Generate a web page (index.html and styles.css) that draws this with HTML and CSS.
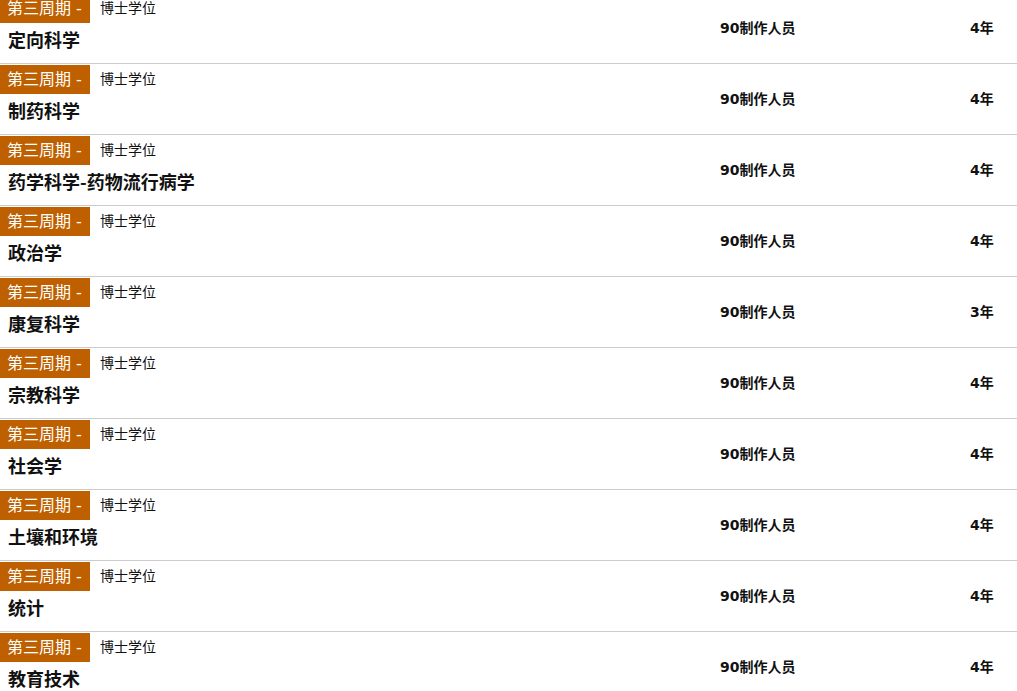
FILE: index.html
```html
<!DOCTYPE html>
<html lang="zh">
<head>
<meta charset="utf-8">
<link rel="stylesheet" href="styles.css">
</head>
<body>
<div class="list">
  <div class="row"><div class="info"><div class="meta"><span class="badge">第三周期 -</span><span class="degree">博士学位</span></div><div class="title">定向科学</div></div><div class="credits">90制作人员</div><div class="years">4年</div></div>
  <div class="row"><div class="info"><div class="meta"><span class="badge">第三周期 -</span><span class="degree">博士学位</span></div><div class="title">制药科学</div></div><div class="credits">90制作人员</div><div class="years">4年</div></div>
  <div class="row"><div class="info"><div class="meta"><span class="badge">第三周期 -</span><span class="degree">博士学位</span></div><div class="title">药学科学-药物流行病学</div></div><div class="credits">90制作人员</div><div class="years">4年</div></div>
  <div class="row"><div class="info"><div class="meta"><span class="badge">第三周期 -</span><span class="degree">博士学位</span></div><div class="title">政治学</div></div><div class="credits">90制作人员</div><div class="years">4年</div></div>
  <div class="row"><div class="info"><div class="meta"><span class="badge">第三周期 -</span><span class="degree">博士学位</span></div><div class="title">康复科学</div></div><div class="credits">90制作人员</div><div class="years">3年</div></div>
  <div class="row"><div class="info"><div class="meta"><span class="badge">第三周期 -</span><span class="degree">博士学位</span></div><div class="title">宗教科学</div></div><div class="credits">90制作人员</div><div class="years">4年</div></div>
  <div class="row"><div class="info"><div class="meta"><span class="badge">第三周期 -</span><span class="degree">博士学位</span></div><div class="title">社会学</div></div><div class="credits">90制作人员</div><div class="years">4年</div></div>
  <div class="row"><div class="info"><div class="meta"><span class="badge">第三周期 -</span><span class="degree">博士学位</span></div><div class="title">土壤和环境</div></div><div class="credits">90制作人员</div><div class="years">4年</div></div>
  <div class="row"><div class="info"><div class="meta"><span class="badge">第三周期 -</span><span class="degree">博士学位</span></div><div class="title">统计</div></div><div class="credits">90制作人员</div><div class="years">4年</div></div>
  <div class="row"><div class="info"><div class="meta"><span class="badge">第三周期 -</span><span class="degree">博士学位</span></div><div class="title">教育技术</div></div><div class="credits">90制作人员</div><div class="years">4年</div></div>
</div>
</body>
</html>
```
FILE: styles.css
```css
html, body {
  margin: 0;
  padding: 0;
  background: #fff;
  overflow: hidden;
}
body {
  font-family: "DejaVu Sans", "Noto Sans CJK SC", sans-serif;
  color: #111;
}
.list {
  margin-top: -7px;
}
.row {
  display: grid;
  grid-template-columns: 720px 250px 1fr;
  align-items: center;
  height: 70px;
  border-bottom: 1px solid #cccccc;
}
.info {
  align-self: start;
  padding-top: 1px;
}
.meta {
  display: flex;
  align-items: center;
  height: 29px;
}
.badge {
  display: block;
  width: 90px;
  box-sizing: border-box;
  height: 29px;
  line-height: 29px;
  padding-left: 7px;
  background: #bf6000;
  color: #fff;
  font-size: 16px;
  white-space: nowrap;
}
.degree {
  margin-left: 10px;
  margin-top: -2px;
  font-size: 14px;
  line-height: 20px;
  color: #111;
}
.title {
  margin-top: 2px;
  padding-left: 8px;
  font-family: "Noto Sans CJK SC", sans-serif;
  font-size: 18px;
  font-weight: bold;
  line-height: 28px;
}
.credits, .years {
  font-size: 14px;
  font-weight: bold;
  line-height: 20px;
}
```
